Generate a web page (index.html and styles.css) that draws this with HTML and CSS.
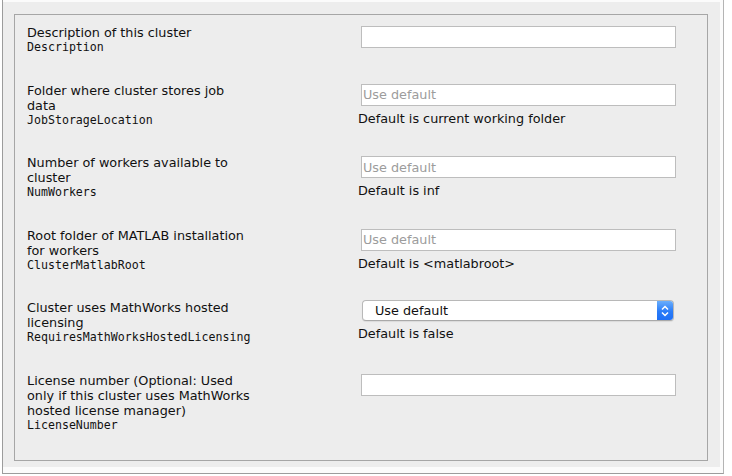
FILE: index.html
```html
<!DOCTYPE html>
<html>
<head>
<meta charset="utf-8">
<link rel="stylesheet" href="styles.css">
</head>
<body>
<div class="frame">
  <div class="panel">
    <div class="group">
      <div class="row">
        <div class="label">Description of this cluster<span class="prop">Description</span></div>
        <div class="field"><input class="text" type="text"></div>
      </div>
      <div class="row">
        <div class="label">Folder where cluster stores job<br>data<span class="prop">JobStorageLocation</span></div>
        <div class="field"><input class="text" type="text" placeholder="Use default"><div class="hint">Default is current working folder</div></div>
      </div>
      <div class="row">
        <div class="label">Number of workers available to<br>cluster<span class="prop">NumWorkers</span></div>
        <div class="field"><input class="text" type="text" placeholder="Use default"><div class="hint">Default is inf</div></div>
      </div>
      <div class="row">
        <div class="label">Root folder of MATLAB installation<br>for workers<span class="prop">ClusterMatlabRoot</span></div>
        <div class="field"><input class="text" type="text" placeholder="Use default"><div class="hint">Default is &lt;matlabroot&gt;</div></div>
      </div>
      <div class="row">
        <div class="label">Cluster uses MathWorks hosted<br>licensing<span class="prop">RequiresMathWorksHostedLicensing</span></div>
        <div class="field">
          <div class="select"><span class="value">Use default</span><span class="stepper"><svg width="16" height="20" viewBox="0 0 16 20"><path d="M5 8.5 L8 5.5 L11 8.5" fill="none" stroke="#fff" stroke-width="1.5"/><path d="M5 11.5 L8 14.5 L11 11.5" fill="none" stroke="#fff" stroke-width="1.5"/></svg></span></div>
          <div class="hint">Default is false</div>
        </div>
      </div>
      <div class="row">
        <div class="label">License number (Optional: Used<br>only if this cluster uses MathWorks<br>hosted license manager)<span class="prop">LicenseNumber</span></div>
        <div class="field"><input class="text" type="text"></div>
      </div>
    </div>
  </div>
</div>
</body>
</html>
```
FILE: styles.css
```css
html, body {
  margin: 0;
  padding: 0;
  background: #ffffff;
}
body {
  width: 732px;
  height: 476px;
  overflow: hidden;
  font-family: "DejaVu Sans", Verdana, sans-serif;
  font-size: 12.8px;
  color: #111;
}
.frame {
  margin-left: 2px;
  width: 720px;
  height: 473px;
  border-left: 1px solid #9c9c9c;
  border-right: 1px solid #b4b4b4;
  border-bottom: 1px solid #9c9c9c;
  background: #fbfbfb;
  display: flex;
  flex-direction: column;
}
.panel {
  margin: 2px 3px 6px 0;
  flex: 1;
  background: #ededed;
  padding: 12px 12px 6px 11px;
  display: flex;
  flex-direction: column;
}
.group {
  flex: 1;
  border: 1px solid #a6a6a6;
  padding: 10px 0 0 12px;
}
.row {
  display: grid;
  grid-template-columns: 331px 322px;
  margin-bottom: 27.5px;
}
.label {
  line-height: 15px;
}
.prop {
  display: block;
  line-height: 15px;
  font-family: "DejaVu Sans Mono", "Liberation Mono", monospace;
  font-size: 11.6px;
}
.field {
  display: flex;
  flex-direction: column;
  align-items: flex-start;
}
.text {
  margin: 1px 0 0 3px;
  width: 315px;
  height: 22px;
  box-sizing: border-box;
  border: 1px solid #bdbdbd;
  background: #fff;
  padding: 0 0 0 1px;
  font-family: "DejaVu Sans", Verdana, sans-serif;
  font-size: 12.8px;
  color: #111;
  outline: none;
}
.text::placeholder {
  color: #9c9c9c;
}
.hint {
  margin-top: 5px;
  line-height: 15px;
}
.select {
  margin: 0 0 0 4px;
  width: 312px;
  height: 21px;
  box-sizing: border-box;
  border: 1px solid #b8b8b8;
  border-bottom-color: #a9a9a9;
  border-radius: 4px;
  background: #fff;
  box-shadow: 0 1px 1px rgba(0,0,0,0.08);
  display: flex;
  align-items: stretch;
  overflow: hidden;
}
.value {
  flex: 1;
  padding-left: 12px;
  line-height: 19px;
  color: #111;
}
.stepper {
  width: 16px;
  background: linear-gradient(#6aaefc, #2a7cf8 55%, #1e6ff5);
  display: flex;
  align-items: center;
  justify-content: center;
}
.stepper svg {
  display: block;
}
```
